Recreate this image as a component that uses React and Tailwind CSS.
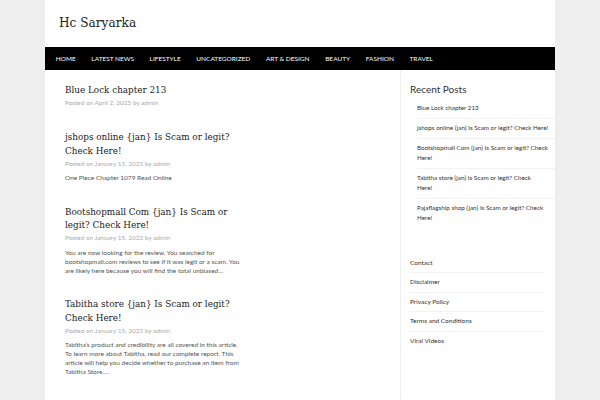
const nav = ["Home", "Latest News", "Lifestyle", "Uncategorized", "Art & Design", "Beauty", "Fashion", "Travel"]

const posts = [
  { title: "Blue Lock chapter 213", date: "April 2, 2023", excerpt: null },
  { title: "jshops online {jan} Is Scam or legit? Check Here!", date: "January 15, 2023", excerpt: "One Piece Chapter 1079 Read Online" },
  {
    title: "Bootshopmall Com {jan} Is Scam or legit? Check Here!",
    date: "January 15, 2023",
    excerpt: "You are now looking for the review. You searched for bootshopmall.com reviews to see if it was legit or a scam. You are likely here because you will find the total unbiased…",
  },
  {
    title: "Tabitha store {jan} Is Scam or legit? Check Here!",
    date: "January 15, 2023",
    excerpt: "Tabitha’s product and credibility are all covered in this article. To learn more about Tabitha, read our complete report. This article will help you decide whether to purchase an item from Tabitha Store.…",
  },
]

// line breaks as they fall in the narrow sidebar
const recent = [
  ["Blue Lock chapter 213"],
  ["jshops online {jan} Is Scam or legit? Check Here!"],
  ["Bootshopmall Com {jan} Is Scam or legit? Check", "Here!"],
  ["Tabitha store {jan} Is Scam or legit? Check", "Here!"],
  ["Pajaflagship shop {jan} Is Scam or legit? Check", "Here!"],
]

const pages = ["Contact", "Disclaimer", "Privacy Policy", "Terms and Conditions", "Viral Videos"]

const serif = { fontFamily: '"DejaVu Serif", serif' }

export default function App() {
  return (
    <div className="min-h-[400px] bg-[#eeeeee]" style={{ fontFamily: 'Lato, "Open Sans", sans-serif' }}>
      <div className="mx-[45px] min-h-[400px] bg-white">
        <header className="h-[47px] pl-[14px] pt-[12px]">
          <h1 className="text-[13.5px] leading-[20px] text-[#222] [font-stretch:condensed]" style={serif}>Hc Saryarka</h1>
        </header>

        <nav className="flex h-[23px] items-center bg-black px-[3px]">
          {nav.map((item) => (
            <a key={item} className="px-[7.8px] text-[6.5px] uppercase text-white">{item}</a>
          ))}
        </nav>

        <div className="flex">
          <main className="w-[355px] pl-[20px] pt-[12.5px]">
            <div className="w-[177px]">
              {posts.map((post) => (
                <article key={post.title} className="mb-[22.5px]">
                  <h2 className="text-[9.8px] leading-[13.5px] text-[#1a1a1a] [font-stretch:condensed]" style={serif}>{post.title}</h2>
                  <div className="mt-[1.5px] text-[6.4px] leading-[10px] text-[#aaaaaa]">
                    Posted on {post.date} by admin
                  </div>
                  {post.excerpt && (
                    <p className="mt-[4.5px] text-[6.5px] leading-[9px] text-[#555]">{post.excerpt}</p>
                  )}
                </article>
              ))}
            </div>
          </main>

          <aside className="w-[155px] border-l border-[#eeeeee] pl-[9px] pt-[12px]">
            <h3 className="text-[10px] leading-[14px] text-[#333]">Recent Posts</h3>
            <ul className="mt-[2.5px] pl-[7px]">
              {recent.map((lines) => (
                <li key={lines[0]} className="border-b border-[#f2f2f2] py-[4.5px] text-[6.3px] leading-[10px] text-[#333] last:border-0">
                  {lines.map((line) => (
                    <span key={line} className="block whitespace-nowrap">{line}</span>
                  ))}
                </li>
              ))}
            </ul>

            <ul className="mt-[26px] pr-[10px]">
              {pages.map((item) => (
                <li key={item} className="border-b border-[#f2f2f2] py-[4px] text-[6.5px] leading-[10.5px] text-[#333] last:border-0">
                  {item}
                </li>
              ))}
            </ul>
          </aside>
        </div>
      </div>
    </div>
  )
}
